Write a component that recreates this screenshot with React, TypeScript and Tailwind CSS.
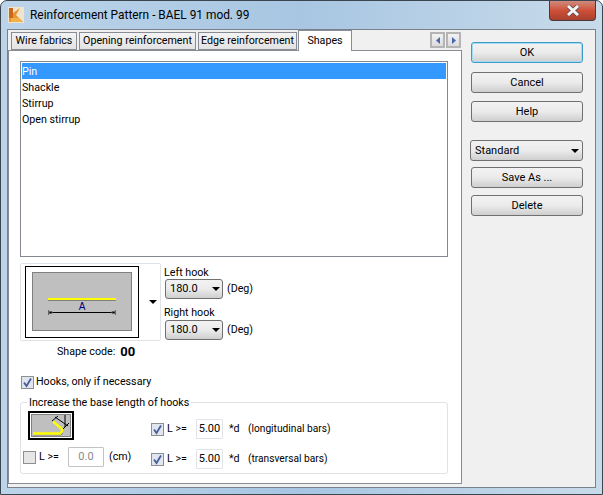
import React from "react";

const Chk = ({ on, dim }: { on?: boolean; dim?: boolean }) => (
  <span className={`w-[13px] h-[13px] shrink-0 border border-[#8e8f8f] flex items-center justify-center ${dim ? "bg-[#e6e6e6]" : "bg-[#dfe6f0]"}`}>
    {on && (
      <svg width="11" height="11" viewBox="0 0 11 11">
        <path d="M2 5.5 L4.5 9 L9 1.5" fill="none" stroke="#4a5f97" strokeWidth="1.8" />
      </svg>
    )}
  </span>
);

const Btn = ({ label, def }: { label: string; def?: boolean }) => (
  <button className={`w-[112px] h-[21px] pt-[1px] rounded-[3px] border bg-gradient-to-b from-[#f2f2f2] via-[#ebebeb] to-[#cfcfcf] text-[11px] text-black flex items-center justify-center ${def ? "border-[#3c9bc9] shadow-[inset_0_0_0_1px_#a5dcf2]" : "border-[#707070]"}`}>
    {label}
  </button>
);

const Arrow = () => (
  <svg width="8" height="4" viewBox="0 0 8 4" className="shrink-0">
    <path d="M0 0 H8 L4 4 Z" fill="#000" />
  </svg>
);

const Combo = ({ label, wide }: { label: string; wide?: boolean }) => (
  <div className={`rounded-[3px] border border-[#707070] bg-gradient-to-b from-[#f2f2f2] via-[#ebebeb] to-[#cfcfcf] flex items-center justify-between text-[11px] text-black ${wide ? "w-[113px] h-[21px] pl-[4px] pr-[3px]" : "w-[58px] h-[20px] pl-[4px] pr-[2px]"}`}>
    <span className="pt-[1px]">{label}</span>
    <Arrow />
  </div>
);

const Tab = ({ label, w, active }: { label: string; w: number; active?: boolean }) => (
  <div
    style={{ width: w }}
    className={`border border-[#898c95] flex items-center justify-center whitespace-nowrap text-black ${active ? "h-[21px] bg-white border-b-0 z-10" : "h-[18px] pt-[1px] mt-[2px] mr-[2px] last:mr-0 bg-gradient-to-b from-[#f3f3f3] to-[#e3e3e3]"}`}
  >
    {label}
  </div>
);

const NumBox = ({ v, w, dim }: { v: string; w: number; dim?: boolean }) => (
  <div style={{ width: w }} className={`h-[20px] border rounded-[1px] flex items-center justify-center text-[11px] ${dim ? "border-[#c3c3c3] text-[#8a8a8a]" : "border-[#dfe3e8] text-black"} bg-white`}>
    {v}
  </div>
);

const ScrollBtn = ({ w, left }: { w: number; left?: boolean }) => (
  <div style={{ width: w }} className="h-[16px] border-2 border-[#b4b4b4] bg-gradient-to-b from-[#f2f2f2] to-[#dcdcdc] flex items-center justify-center">
    <svg width="4" height="7" viewBox="0 0 4 7">
      <path d={left ? "M4 0 V7 L0 3.5 Z" : "M0 0 V7 L4 3.5 Z"} fill="#4a68b0" />
    </svg>
  </div>
);

export default function App() {
  return (
    <div className="w-[603px] h-[495px] rounded-t-[7px] border border-[#3a4550] bg-gradient-to-r from-[#bcd4e9] via-[#a8c6e2] to-[#c8dbea] flex flex-col overflow-hidden font-['Roboto',sans-serif] text-black text-[10.7px]">
      {/* Title bar */}
      <div className="h-[28px] shrink-0 flex items-start pl-[7px] relative">
        <svg width="16" height="16" viewBox="0 0 16 16" className="mt-[6px] shrink-0">
          <rect width="16" height="16" fill="#f0e4cc" />
          <path d="M1 1 H5 V6 L12 1 L8 8 L15 15 H1 Z" fill="#e8952f" />
          <path d="M1 1 H5 V11 H1 Z" fill="#c9691f" />
          <path d="M3 11 H11 L15 15 H3 Z" fill="#f2b04a" />
        </svg>
        <span className="ml-[6px] mt-[6px] text-[11.9px] leading-[17px] whitespace-nowrap">Reinforcement Pattern - BAEL 91 mod. 99</span>
        <div className="absolute right-[6px] top-0 w-[47px] h-[20px] rounded-b-[4px] border border-t-0 border-[#4a3a3a] bg-gradient-to-b from-[#cf8a7c] via-[#cf4f38] to-[#a8402f] flex items-center justify-center">
          <svg width="14" height="11" viewBox="0 0 14 11">
            <path d="M2 1 L12 10 M12 1 L2 10" stroke="#5a4a4a" strokeWidth="4.4" />
            <path d="M2 1 L12 10 M12 1 L2 10" stroke="#f4f4f4" strokeWidth="3" />
          </svg>
        </div>
      </div>

      {/* Client */}
      <div className="mx-[6px] h-[459px] border border-[#79828c] bg-[#f0f0f0] flex">
        {/* Left pane */}
        <div className="w-[454px] shrink-0 flex flex-col">
          <div className="flex h-[20px] pl-[3px] pr-[1px] relative">
            <Tab label="Wire fabrics" w={66} />
            <Tab label="Opening reinforcement" w={117} />
            <Tab label="Edge reinforcement" w={99} />
            <div className="-ml-[1px]"><Tab label="Shapes" w={54} active /></div>
            <div className="ml-auto flex gap-[1px] mt-[2px]">
              <ScrollBtn w={15} left />
              <ScrollBtn w={15} />
            </div>
          </div>

          {/* Page */}
          <div className="h-[434px] w-[454px] border border-[#898c95] bg-white flex flex-col pl-[11px] pt-[10px]">
            {/* List */}
            <div className="w-[428px] h-[196px] border border-[#828790] p-[1px] shrink-0 flex flex-col leading-[17px]">
              <div className="h-[16px] bg-[#3399ff] text-white">Pin</div>
              <div className="h-[16px]">Shackle</div>
              <div className="h-[16px]">Stirrup</div>
              <div className="h-[16px]">Open stirrup</div>
            </div>

            {/* Shape row */}
            <div className="flex mt-[6px] h-[78px]">
              <div className="w-[141px] h-[78px] border border-[#dfe3e8] rounded-[2px] flex items-center pl-[4px]">
                <div className="w-[114px] h-[72px] border border-black px-[6px] pt-[5px] pb-[6px]">
                  <div className="w-full h-full border border-[#808080] bg-[#bfbfbf] flex flex-col items-center pt-[25px]">
                    <svg width="72" height="22" viewBox="0 0 72 22" className="block">
                      <rect x="2" y="0" width="68" height="2" fill="#ffff00" />
                      <rect x="2" y="2" width="68" height="1" fill="#808080" />
                      <path d="M2 14.5 H70" stroke="#000" strokeWidth="1" fill="none" />
                      <path d="M2.5 12 V17 M69.5 12 V17 M3 13.5 H6 V15.5 H3 Z M66 13.5 H69 V15.5 H66 Z" stroke="#666" strokeWidth="1" fill="none" />
                      <text x="36" y="12" textAnchor="middle" fontSize="10" fill="#000080" fontFamily="Liberation Sans">A</text>
                    </svg>
                  </div>
                </div>
                <span className="ml-[10px]"><Arrow /></span>
              </div>
              <div className="ml-[4px] flex flex-col">
                <div className="h-[14px] leading-[14px] mt-[3px] -ml-[1px]">Left hook</div>
                <div className="flex items-center gap-[4px] -mt-[1px]">
                  <Combo label="180.0" />
                  <span>(Deg)</span>
                </div>
                <div className="h-[14px] leading-[14px] mt-[7px] -ml-[1px]">Right hook</div>
                <div className="flex items-center gap-[4px]">
                  <Combo label="180.0" />
                  <span>(Deg)</span>
                </div>
              </div>
            </div>

            <div className="flex items-center mt-[3px] h-[16px] pl-[37px]">
              <span>Shape code:</span>
              <b className="ml-[5px] text-[13px]">00</b>
            </div>

            <div className="flex items-center gap-[2px] mt-[14px] h-[16px] ml-[1px]">
              <Chk on />
              <span className="pt-[1px]">Hooks, only if necessary</span>
            </div>

            {/* Group */}
            <div className="relative w-[428px] h-[72px] mt-[12px] border border-[#dfe3e8] rounded-[3px] flex px-[7px] pt-[8px]">
              <span className="absolute -top-[8px] left-[6px] bg-white px-[2px] leading-[15px] whitespace-nowrap">Increase the base length of hooks</span>
              <div className="w-[123px] shrink-0 flex flex-col">
                <div className="w-[46px] h-[29px] border-2 border-black p-[1px] bg-white">
                  <div className="w-full h-full border border-[#808080] bg-[#bfbfbf]">
                    <svg width="38" height="21" viewBox="0 0 38 21" className="block">
                      <path d="M1 20 H29 L31 18" fill="none" stroke="#808080" strokeWidth="1" />
                      <path d="M1 18.5 H28 L30 16 V14 L21 6.5" fill="none" stroke="#ffff00" strokeWidth="2.4" />
                      <path d="M23 2 L36 11 M33 0 V12 M20 6 L26 1 M31 14 L37 8" stroke="#000" strokeWidth="1" fill="none" />
                    </svg>
                  </div>
                </div>
                <div className="flex items-center mt-[7px] -ml-[5px] h-[20px]">
                  <Chk dim />
                  <span className="ml-[3px] w-[29px]">L &gt;=</span>
                  <NumBox v="0.0" w={36} dim />
                  <span className="ml-[5px]">(cm)</span>
                </div>
              </div>
              <div className="flex flex-col pt-[8px] gap-[10px]">
                <div className="flex items-center h-[20px]">
                  <Chk on />
                  <span className="ml-[3px] w-[29px]">L &gt;=</span>
                  <NumBox v="5.00" w={27} />
                  <span className="ml-[6px] w-[19px]">*d</span>
                  <span className="text-[10.2px]">(longitudinal bars)</span>
                </div>
                <div className="flex items-center h-[20px]">
                  <Chk on />
                  <span className="ml-[3px] w-[29px]">L &gt;=</span>
                  <NumBox v="5.00" w={27} />
                  <span className="ml-[6px] w-[19px]">*d</span>
                  <span className="text-[10.2px]">(transversal bars)</span>
                </div>
              </div>
            </div>
          </div>
        </div>

        {/* Right pane */}
        <div className="flex flex-col pl-[9px] pt-[12px]">
          <Btn label="OK" def />
          <div className="mt-[9px]"><Btn label="Cancel" /></div>
          <div className="mt-[8px]"><Btn label="Help" /></div>
          <div className="mt-[18px] -ml-[1px]"><Combo label="Standard" wide /></div>
          <div className="mt-[6px]"><Btn label="Save As ..." /></div>
          <div className="mt-[7px]"><Btn label="Delete" /></div>
        </div>
      </div>
    </div>
  );
}
